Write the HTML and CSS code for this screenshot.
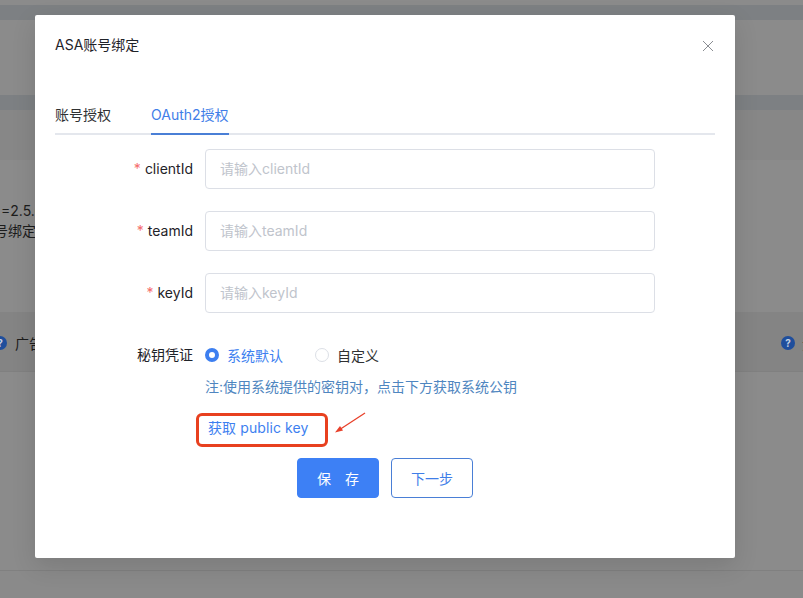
FILE: index.html
```html
<!DOCTYPE html>
<html lang="zh-CN">
<head>
<meta charset="utf-8">
<title>ASA账号绑定</title>
<link rel="stylesheet" href="styles.css">
</head>
<body>
<div class="page">
  <div class="strip"></div>
  <div class="band"></div>
  <div class="panel-a"></div>
  <div class="band"></div>
  <div class="panel-b"></div>
  <div class="panel-c">
    <p class="bg-line">=2.5.0</p>
    <p class="bg-line bg-line-2">号绑定&#65292;</p>
  </div>
  <div class="bg-row">
    <span class="bg-cell-l"><span class="help">?</span>广告</span>
    <span class="bg-cell-r"><span class="help">?</span>素</span>
  </div>
  <div class="panel-d"></div>
  <div class="panel-e"></div>
</div>

<div class="modal">
  <header class="modal-head">
    <h2 class="modal-title">ASA账号绑定</h2>
    <svg class="close" viewBox="0 0 12 12" width="12" height="12"><path d="M1 1l10 10M11 1L1 11" fill="none" stroke="#8a8d92" stroke-width="1"/></svg>
  </header>
  <nav class="tabs">
    <span class="tab">账号授权</span>
    <span class="tab tab-active">OAuth2授权</span>
  </nav>
  <form class="form">
    <div class="row">
      <label class="label"><i class="req">*</i>clientId</label>
      <input class="input" placeholder="请输入clientId">
    </div>
    <div class="row">
      <label class="label"><i class="req">*</i>teamId</label>
      <input class="input" placeholder="请输入teamId">
    </div>
    <div class="row">
      <label class="label"><i class="req">*</i>keyId</label>
      <input class="input" placeholder="请输入keyId">
    </div>
    <div class="row row-radio">
      <label class="label">秘钥凭证</label>
      <span class="radio radio-on"></span><span class="radio-text on">系统默认</span>
      <span class="radio"></span><span class="radio-text">自定义</span>
    </div>
    <p class="note">注:使用系统提供的密钥对&#65292;点击下方获取系统公钥</p>
    <div class="key-row">
      <a class="key-link">获取 public key</a>
      <svg class="arrow" viewBox="0 0 34 24" width="34" height="24"><path d="M31 1L5 18" fill="none" stroke="#e8402a" stroke-width="1.3"/><path d="M1 20.500L9 18.500 6 14z" fill="#e8402a"/></svg>
    </div>
    <div class="actions">
      <button type="button" class="btn btn-primary">保 存</button>
      <button type="button" class="btn btn-ghost">下一步</button>
    </div>
  </form>
</div>
</body>
</html>
```
FILE: styles.css
```css
* { box-sizing: border-box; }
html, body { margin: 0; height: 100%; overflow: hidden; }
body {
  font-family: Inter, "Noto Sans CJK SC", sans-serif;
  font-size: 14px;
  color: #1f2329;
  background: #8a8a8a;
}
.page { height: 598px; display: flex; flex-direction: column; color: #1c1c1c; }
.strip { height: 5px; background: #8b8b8b; }
.band { height: 15px; background: #7d8083; }
.panel-a { height: 75px; background: #8b8b8b; }
.panel-b { height: 50px; background: #878787; }
.panel-c { height: 152px; background: #8b8b8b; padding-top: 41px; }
.bg-line { margin: 0 0 0 1px; line-height: 20px; white-space: nowrap; font-size: 14px; color: #1c1c1c; }
.bg-line-2 { margin-left: -6px; }
.bg-row {
  height: 60px;
  background: #848484;
  border-bottom: 1px solid #808080;
  display: flex;
  justify-content: space-between;
  align-items: center;
  padding: 2px 0 0;
}
.bg-cell-l { display: flex; align-items: center; margin-left: -7px; gap: 8px; }
.bg-cell-r { display: flex; align-items: center; width: 22px; gap: 7px; overflow: hidden; flex: none; }
.help {
  width: 14px; height: 14px; flex: none;
  border-radius: 50%;
  background: #1f4e9c;
  color: #c4cfe2;
  font-size: 10px;
  font-weight: 700;
  line-height: 14px;
  text-align: center;
}
.panel-d { height: 199px; background: #8b8b8b; border-bottom: 1px solid #808080; }
.panel-e { flex: 1; background: #8a8a8a; }

.modal {
  position: absolute;
  left: 35px; top: 15px;
  width: 700px; height: 543px;
  background: #fff;
  border-radius: 2px;
  padding: 0 20px;
  box-shadow: 0 8px 24px rgba(0,0,0,.12);
}
.modal-head { height: 60px; display: flex; justify-content: space-between; align-items: center; padding-right: 1px; }
.modal-title { margin: 0; font-size: 14px; font-weight: 400; color: #1f2329; line-height: 60px; }
.close { flex: none; margin-top: 1px; }
.tabs {
  margin-top: 18px;
  height: 42px;
  display: flex;
  gap: 40px;
  border-bottom: 2px solid #e4e7ed;
  align-items: stretch;
}
.tab { font-size: 14px; line-height: 40px; padding-top: 2px; color: #303133; height: 42px; }
.tab-active { color: #3f7ee8; border-bottom: 2px solid #4a7fd6; }

.form { display: block; padding-top: 14px; }
.row { display: flex; align-items: center; height: 40px; margin-bottom: 22px; }
.label { width: 138px; text-align: right; margin: -2px 12px 0 0; font-size: 14px; color: #1f2329; flex: none; }
.req { font-style: normal; color: #f56c6c; margin-right: 4px; }
.input {
  width: 450px; height: 40px;
  padding: 0 14px 2px;
  border: 1px solid #dcdfe6;
  border-radius: 4px;
  font: inherit;
  font-size: 14px;
  outline: none;
  background: #fff;
}
.input::placeholder { color: #c0c4cc; opacity: 1; }
.row-radio { margin: -2px 0 0; height: 44px; }
.radio {
  width: 14px; height: 14px; flex: none;
  border-radius: 50%;
  border: 1px solid #dcdfe6;
  background: #fff;
  margin-right: 8px;
}
.radio-on { border: 4.500px solid #3d7ff0; }
.radio-text { font-size: 14px; color: #303133; margin-right: 32px; }
.radio-text.on { color: #3d7ff0; }
.note { margin: 0 0 0 150px; font-size: 14px; line-height: 20px; color: #4f86c0; }
.key-row { display: flex; align-items: center; margin: 16px 0 0 141px; height: 34px; }
.key-link {
  width: 132px; height: 34px;
  border: 3px solid #e8401f;
  border-radius: 6px;
  padding-left: 9px;
  line-height: 24px;
  font-size: 14px;
  color: #3d7ff0;
  flex: none;
  white-space: nowrap;
  letter-spacing: .1px;
}
.arrow { margin: -12px 0 0 6px; flex: none; }
.actions { display: flex; gap: 12px; margin: 11px 0 0 242px; }
.btn {
  width: 82px; height: 40px;
  border-radius: 4px;
  font: inherit;
  font-size: 14px;
  padding: 0;
}
.btn-primary { background: #3d80f5; border: 1px solid #3d80f5; color: #fff; word-spacing: 10px; }
.btn-ghost { background: #fff; border: 1px solid #4a7fd6; color: #3f7ee8; }
```
